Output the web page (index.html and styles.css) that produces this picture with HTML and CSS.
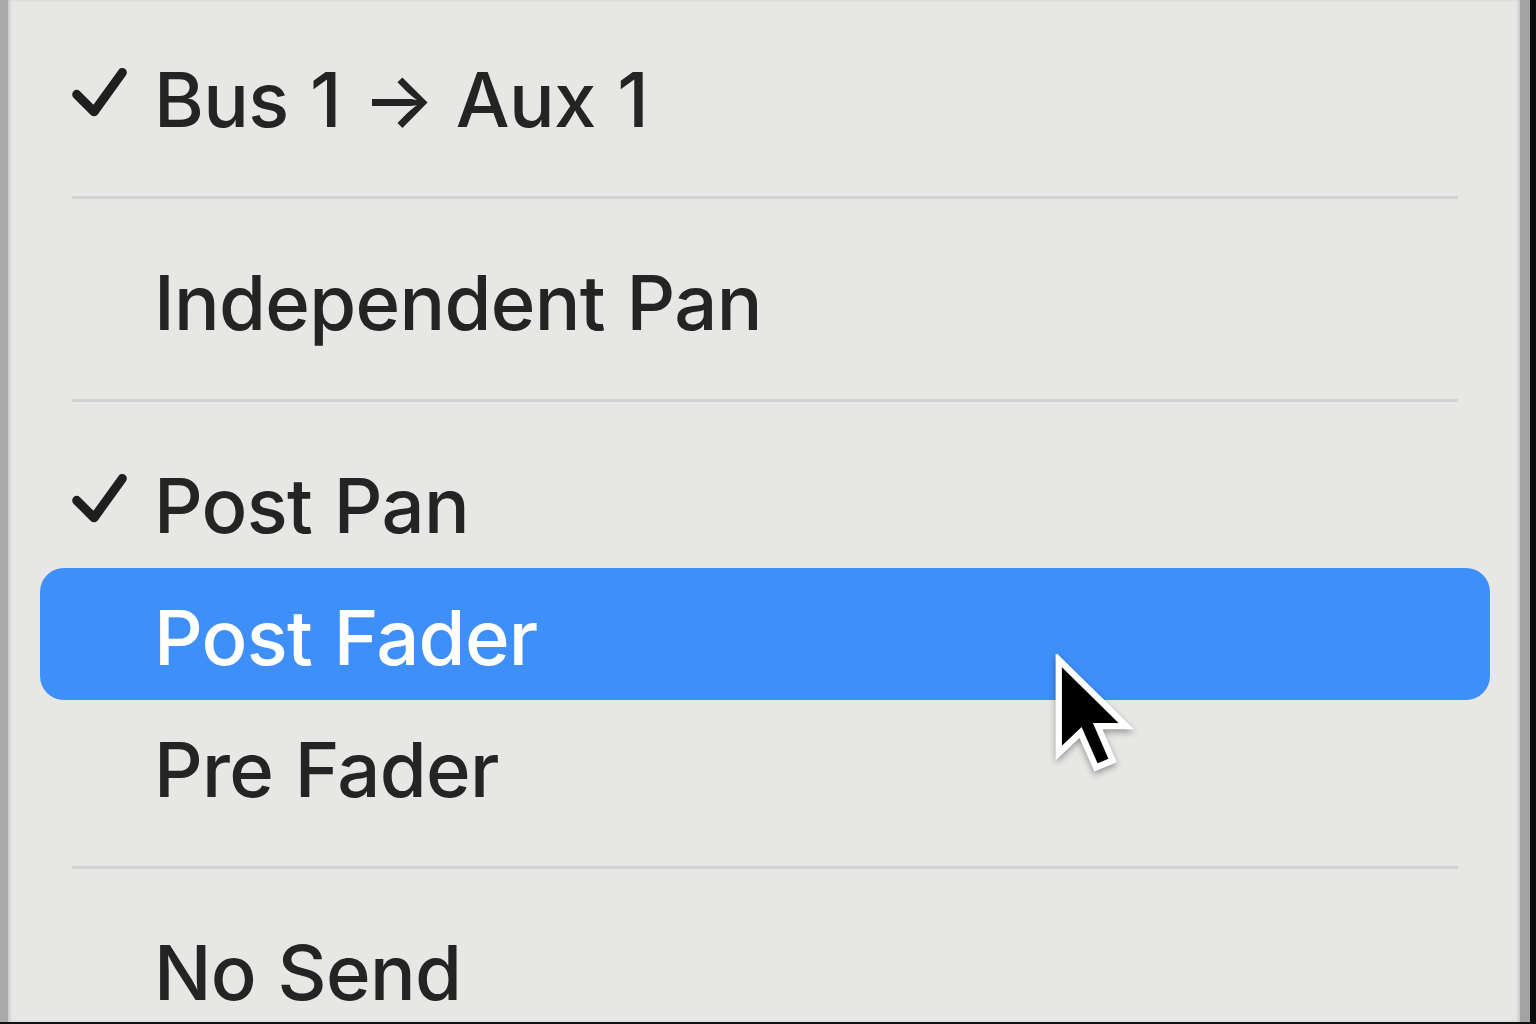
FILE: index.html
```html
<!DOCTYPE html>
<html>
<head>
<meta charset="utf-8">
<link rel="stylesheet" href="styles.css">
</head>
<body>
<div class="frame">
  <div class="menu">
    <div class="item">
      <svg class="check" viewBox="0 0 60 56"><path d="M5 29 L24 48 L55 5" /></svg>
      <span class="label">Bus 1 → Aux 1</span>
    </div>
    <div class="sep"><div class="line"></div></div>
    <div class="item"><span class="label">Independent Pan</span></div>
    <div class="sep"><div class="line"></div></div>
    <div class="item">
      <svg class="check" viewBox="0 0 60 56"><path d="M5 29 L24 48 L55 5" /></svg>
      <span class="label">Post Pan</span>
    </div>
    <div class="item selected">
      <span class="label">Post Fader</span>
      <svg class="cursor" viewBox="0 0 16 22"><path d="M1.5 1 L1.5 17.3 L5.3 13.7 L8 19.8 L10.9 18.6 L8.3 12.6 L13.3 12.6 Z" /></svg>
    </div>
    <div class="item"><span class="label">Pre Fader</span></div>
    <div class="sep"><div class="line"></div></div>
    <div class="item"><span class="label">No Send</span></div>
  </div>
</div>
</body>
</html>
```
FILE: styles.css
```css
html, body {
  margin: 0;
  padding: 0;
  width: 1536px;
  height: 1024px;
  overflow: hidden;
  background: #111;
}
.frame {
  width: 1536px;
  height: 1022px;
  display: flex;
  background: #0c0c0c;
}
.menu {
  box-sizing: border-box;
  width: 1530px;
  height: 1022px;
  background: #e7e7e6;
  border-left: 8px solid #a9aaa9;
  border-right: 10px solid #a2a3a2;
  box-shadow: inset 3px 0 3px -1px #c9c9c9, inset -3px 0 3px -1px #c9c9c9;
  padding: 30px 30px 0 32px;
  display: flex;
  flex-direction: column;
  overflow: hidden;
  font-family: Inter, "Noto Sans", "Liberation Sans", sans-serif;
  color: #242424;
}
.item {
  flex: 0 0 132px;
  height: 132px;
  border-radius: 24px;
  display: flex;
  align-items: center;
  position: relative;
  padding-left: 114px;
}
.label {
  font-size: 76px;
  font-weight: 450;
  line-height: 1;
  letter-spacing: -0.7px;
  word-spacing: 2px;
  white-space: nowrap;
  padding-top: 5px;
}
.check {
  position: absolute;
  left: 32px;
  top: 38px;
  width: 55px;
  height: 51px;
}
.check path {
  fill: none;
  stroke: #1f1f1f;
  stroke-width: 10;
  stroke-linecap: round;
  stroke-linejoin: round;
}
.selected {
  background: #3f8ff8;
  color: #ffffff;
}
.sep {
  flex: 0 0 71px;
  height: 71px;
  display: flex;
  align-items: center;
  padding: 0 32px;
}
.line {
  flex: 1;
  height: 3px;
  background: #d2d2d2;
}
.cursor {
  position: absolute;
  left: 1010px;
  top: 86px;
  width: 92px;
  height: 126px;
  filter: drop-shadow(0 3px 3px rgba(0,0,0,0.35));
}
.cursor path {
  fill: #000;
  stroke: #fff;
  stroke-width: 1.1;
  stroke-linejoin: miter;
}
```
